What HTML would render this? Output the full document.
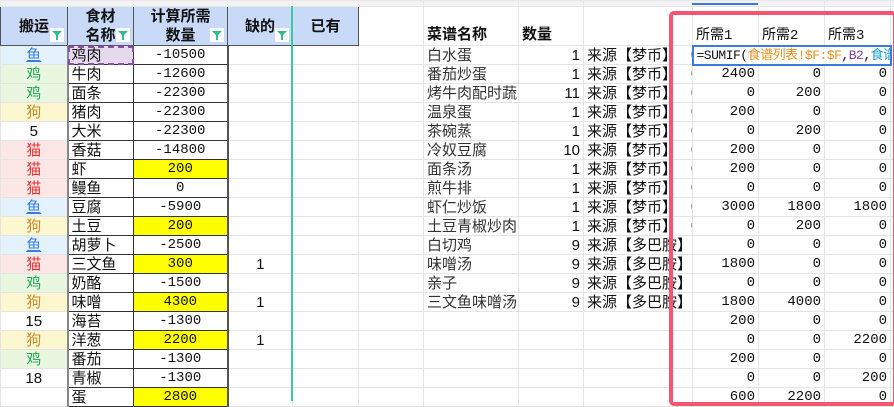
<!DOCTYPE html>
<html><head><meta charset="utf-8"><style>
*{margin:0;padding:0;box-sizing:border-box}
body{width:894px;height:401px;overflow:hidden;background:#fff;font-family:"Liberation Sans","Noto Sans CJK SC",sans-serif;font-size:15px;color:#111;position:relative}
table{border-collapse:collapse;table-layout:fixed;position:absolute;left:0;top:0;width:894px}
td{border:1px solid #e4e4e4;height:19px;padding:0 3px;white-space:nowrap;overflow:hidden;line-height:17px}
tr.r0 td{height:6px;background:#f3f3f3;border-color:#e8e8e8}
tr.h td{height:39px}
.hd{background:#c9daf8;font-weight:bold;text-align:center;border:1px solid #555;position:relative;line-height:19px;vertical-align:middle}
.f{position:absolute;right:3px;bottom:3px;width:14px;height:14px;background:#fff}
.f:after{content:"";position:absolute;left:2px;top:3px;border-left:5px solid transparent;border-right:5px solid transparent;border-top:5px solid #2fbf8f}
.f:before{content:"";position:absolute;left:6px;top:7px;width:2px;height:5px;background:#2fbf8f}
.c{text-align:center}.r{text-align:right}
.B{border-left:2px solid #888;border-right:1px solid #333;border-bottom:1px solid #333}
.C{border-left:1px solid #333;border-right:2px solid #555;border-bottom:1px solid #333;text-align:center;font-family:"Liberation Mono",monospace;font-size:14px}
.y{background:#ff0}
.fish{background:#e3f2fd;color:#3b7de0;text-decoration:underline;text-align:center}
.chk{background:#eaf7e0;color:#1fa855;text-align:center}
.dog{background:#fdf7cf;color:#c88a2c;text-align:center}
.cat{background:#fde6e6;color:#e03434;text-align:center}
.num{text-align:center}
.rh{font-weight:bold;vertical-align:bottom;padding-bottom:2px}
.gr{color:#333}
.m{font-family:"Liberation Mono","Noto Sans CJK SC",monospace;font-size:14px;text-align:right}
.fx{font-family:"Liberation Mono","Noto Sans CJK SC",monospace;font-size:13px;letter-spacing:-0.5px;text-align:left;border:2px solid #3a7be0;padding-left:3px}
</style></head><body>
<table>
<colgroup><col style="width:67px"><col style="width:66px"><col style="width:94px"><col style="width:65px"><col style="width:66px"><col style="width:65px"><col style="width:95px"><col style="width:65px"><col style="width:109px"><col style="width:66px"><col style="width:66px"><col style="width:66px"><col style="width:4px"></colgroup>
<tr class="r0"><td></td><td></td><td></td><td></td><td></td><td></td><td></td><td></td><td></td><td></td><td></td><td></td><td></td></tr>
<tr class="h"><td class="hd">搬运<span class="f"></span></td><td class="hd">食材<br>名称<span class="f"></span></td><td class="hd">计算所需<br>数量<span class="f"></span></td><td class="hd">缺的<span class="f"></span></td><td class="hd">已有</td><td></td><td class="rh">菜谱名称</td><td class="rh">数量</td><td></td><td class="m" style="text-align:left;vertical-align:bottom">所需1</td><td class="m" style="text-align:left;vertical-align:bottom">所需2</td><td class="m" style="text-align:left;vertical-align:bottom">所需3</td><td></td></tr>
<tr><td class="fish">鱼</td><td class="B" style="background:#e6d9ee;outline:2px dashed #8a4fa8;outline-offset:-2px">鸡肉</td><td class="C">-10500</td><td></td><td></td><td></td><td class="gr">白水蛋</td><td class="r">1</td><td>来源【梦币】 （1</td><td colspan="3" class="fx">=SUMIF(<span style="color:#e8901c">食谱列表!$F:$F</span>,<span style="color:#8a3fa0">B2</span>,<span style="color:#1a9fd0">食谱</span></td><td></td></tr>
<tr><td class="chk">鸡</td><td class="B">牛肉</td><td class="C">-12600</td><td></td><td></td><td></td><td class="gr">番茄炒蛋</td><td class="r">1</td><td>来源【梦币】 （1</td><td class="m">2400</td><td class="m">0</td><td class="m">0</td><td></td></tr>
<tr><td class="chk">鸡</td><td class="B">面条</td><td class="C">-22300</td><td></td><td></td><td></td><td class="gr">烤牛肉配时蔬</td><td class="r">11</td><td>来源【梦币】 （1</td><td class="m">0</td><td class="m">200</td><td class="m">0</td><td></td></tr>
<tr><td class="dog">狗</td><td class="B">猪肉</td><td class="C">-22300</td><td></td><td></td><td></td><td class="gr">温泉蛋</td><td class="r">1</td><td>来源【梦币】 （1</td><td class="m">200</td><td class="m">0</td><td class="m">0</td><td></td></tr>
<tr><td class="num">5</td><td class="B">大米</td><td class="C">-22300</td><td></td><td></td><td></td><td class="gr">茶碗蒸</td><td class="r">1</td><td>来源【梦币】 （1</td><td class="m">0</td><td class="m">200</td><td class="m">0</td><td></td></tr>
<tr><td class="cat">猫</td><td class="B">香菇</td><td class="C">-14800</td><td></td><td></td><td></td><td class="gr">冷奴豆腐</td><td class="r">10</td><td>来源【梦币】 （1</td><td class="m">200</td><td class="m">0</td><td class="m">0</td><td></td></tr>
<tr><td class="cat">猫</td><td class="B">虾</td><td class="C y">200</td><td></td><td></td><td></td><td class="gr">面条汤</td><td class="r">1</td><td>来源【梦币】 （1</td><td class="m">200</td><td class="m">0</td><td class="m">0</td><td></td></tr>
<tr><td class="cat">猫</td><td class="B">鳗鱼</td><td class="C">0</td><td></td><td></td><td></td><td class="gr">煎牛排</td><td class="r">1</td><td>来源【梦币】 （1</td><td class="m">0</td><td class="m">0</td><td class="m">0</td><td></td></tr>
<tr><td class="fish">鱼</td><td class="B">豆腐</td><td class="C">-5900</td><td></td><td></td><td></td><td class="gr">虾仁炒饭</td><td class="r">1</td><td>来源【梦币】 （1</td><td class="m">3000</td><td class="m">1800</td><td class="m">1800</td><td></td></tr>
<tr><td class="dog">狗</td><td class="B">土豆</td><td class="C y">200</td><td></td><td></td><td></td><td class="gr">土豆青椒炒肉</td><td class="r">1</td><td>来源【梦币】 （1</td><td class="m">0</td><td class="m">200</td><td class="m">0</td><td></td></tr>
<tr><td class="fish">鱼</td><td class="B">胡萝卜</td><td class="C">-2500</td><td></td><td></td><td></td><td class="gr">白切鸡</td><td class="r">9</td><td>来源【多巴胺】</td><td class="m">0</td><td class="m">0</td><td class="m">0</td><td></td></tr>
<tr><td class="cat">猫</td><td class="B">三文鱼</td><td class="C y">300</td><td class="c">1</td><td></td><td></td><td class="gr">味噌汤</td><td class="r">9</td><td>来源【多巴胺】</td><td class="m">1800</td><td class="m">0</td><td class="m">0</td><td></td></tr>
<tr><td class="chk">鸡</td><td class="B">奶酪</td><td class="C">-1500</td><td></td><td></td><td></td><td class="gr">亲子</td><td class="r">9</td><td>来源【多巴胺】</td><td class="m">0</td><td class="m">0</td><td class="m">0</td><td></td></tr>
<tr><td class="dog">狗</td><td class="B">味噌</td><td class="C y">4300</td><td class="c">1</td><td></td><td></td><td class="gr">三文鱼味噌汤</td><td class="r">9</td><td>来源【多巴胺】</td><td class="m">1800</td><td class="m">4000</td><td class="m">0</td><td></td></tr>
<tr><td class="num">15</td><td class="B">海苔</td><td class="C">-1300</td><td></td><td></td><td></td><td></td><td></td><td></td><td class="m">200</td><td class="m">0</td><td class="m">0</td><td></td></tr>
<tr><td class="dog">狗</td><td class="B">洋葱</td><td class="C y">2200</td><td class="c">1</td><td></td><td></td><td></td><td></td><td></td><td class="m">0</td><td class="m">0</td><td class="m">2200</td><td></td></tr>
<tr><td class="chk">鸡</td><td class="B">番茄</td><td class="C">-1300</td><td></td><td></td><td></td><td></td><td></td><td></td><td class="m">200</td><td class="m">0</td><td class="m">0</td><td></td></tr>
<tr><td class="num">18</td><td class="B">青椒</td><td class="C">-1300</td><td></td><td></td><td></td><td></td><td></td><td></td><td class="m">0</td><td class="m">0</td><td class="m">200</td><td></td></tr>
<tr><td></td><td class="B">蛋</td><td class="C y">2800</td><td></td><td></td><td></td><td></td><td></td><td></td><td class="m">600</td><td class="m">2200</td><td class="m">0</td><td></td></tr>
</table>
<div style="position:absolute;left:291px;top:6px;width:2px;height:395px;background:#3cc8a0"></div>
<div style="position:absolute;left:692px;top:3px;width:66px;height:2px;background:#3a7be0"></div>
<div style="position:absolute;left:669px;top:11px;width:228px;height:395px;border:4px solid #f5556e;border-radius:5px"></div>
</body></html>
